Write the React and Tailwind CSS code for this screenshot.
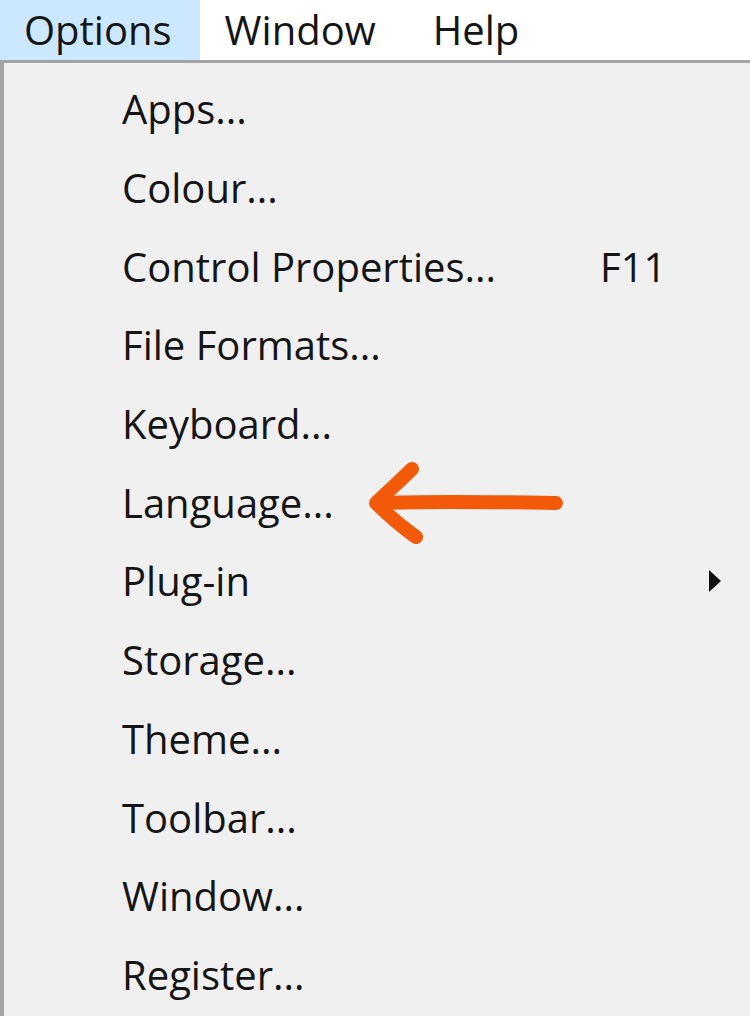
import React from "react";

// Menu "Options" abierto, estilo Windows, ampliado
const items = [
  { label: "Apps..." },
  { label: "Colour..." },
  { label: "Control Properties...", shortcut: "F11" },
  { label: "File Formats..." },
  { label: "Keyboard..." },
  { label: "Language...", arrow: true },
  { label: "Plug-in", submenu: true },
  { label: "Storage..." },
  { label: "Theme..." },
  { label: "Toolbar..." },
  { label: "Window..." },
  { label: "Register..." },
];

function OrangeArrow() {
  return (
    <svg
      width="200"
      height="90"
      viewBox="0 0 200 90"
      className="absolute left-[360px] top-[-4px]"
    >
      <g
        fill="none"
        stroke="#f25a0a"
        strokeWidth="14"
        strokeLinecap="round"
        strokeLinejoin="round"
      >
        <path d="M14 44 C70 42 130 43 192 44" />
        <path d="M48 10 C36 22 22 34 12 44 C24 56 38 68 52 78" />
      </g>
    </svg>
  );
}

export default function App() {
  return (
    <div
      className="w-[750px] h-[1016px] bg-[#f0f0f0] overflow-hidden text-[#151515]"
      style={{ fontFamily: '"Open Sans", "Noto Sans", sans-serif' }}
    >
      {/* barra de menus */}
      <div className="h-[63px] bg-white flex items-center text-[40px] border-b-[3px] border-[#a3a3a3]">
        <div className="h-full bg-[#cce8ff] flex items-center pl-[24px] pr-[28px]">
          Options
        </div>
        <div className="pl-[25px] pr-[25px]">Window</div>
        <div className="pl-[32px]">Help</div>
      </div>

      {/* desplegable */}
      <div className="border-l-[4px] border-[#a3a3a3] h-full pt-[7px]">
        {items.map((it) => (
          <div
            key={it.label}
            className="relative h-[78.7px] flex items-center pl-[118px] text-[40px]"
          >
            <span>{it.label}</span>
            {it.shortcut && (
              <span className="absolute left-[596px]">{it.shortcut}</span>
            )}
            {it.submenu && (
              <svg
                width="14"
                height="22"
                viewBox="0 0 14 22"
                className="absolute left-[704px]"
              >
                <path d="M1 0 L13 11 L1 22 Z" fill="#111" />
              </svg>
            )}
            {it.arrow && <OrangeArrow />}
          </div>
        ))}
      </div>
    </div>
  );
}
